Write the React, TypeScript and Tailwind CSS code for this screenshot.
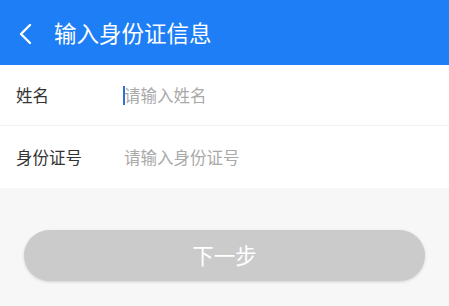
const font = { fontFamily: '"Noto Sans CJK SC", "Noto Sans", sans-serif' };

const Field = ({ label, placeholder, caret, tall }: { label: string; placeholder: string; caret?: boolean; tall?: boolean }) => (
  <div className={`flex items-center bg-white pl-4 ${tall ? "h-[62px]" : "h-[60px]"}`}>
    <span className="w-[108px] text-[16.5px] text-[#333333]">{label}</span>
    <div className="relative flex items-center">
      {caret && <span className="absolute -left-[1px] h-[19px] w-[2px] bg-[#2f6fd6]" />}
      <span className="text-[16.5px] text-[#a9a9a9]">{placeholder}</span>
    </div>
  </div>
);

export default function App() {
  return (
    <div className="flex h-[306px] w-[449px] flex-col bg-[#f7f7f7]" style={font}>
      <header className="flex h-[65px] items-center bg-[#1e7ef6] pl-[17px] text-white">
        <svg width="16" height="22" viewBox="0 0 16 22" fill="none" className="mt-[3px]">
          <path d="M13 2L4 11l9 9" stroke="white" strokeWidth="2.4" strokeLinecap="round" strokeLinejoin="round" />
        </svg>
        <h1 className="ml-[21px] text-[22.5px] leading-none">输入身份证信息</h1>
      </header>
      <div className="flex flex-col gap-px bg-[#f2f2f2]">
        <Field label="姓名" placeholder="请输入姓名" caret />
        <Field label="身份证号" placeholder="请输入身份证号" tall />
      </div>
      <div className="px-6 pt-[42px]">
        <button className="flex h-[51px] w-full items-center justify-center rounded-full bg-[#cbcbcb] text-[21.5px] text-white shadow-[0_1px_3px_rgba(0,0,0,0.15)]">
          下一步
        </button>
      </div>
    </div>
  );
}
